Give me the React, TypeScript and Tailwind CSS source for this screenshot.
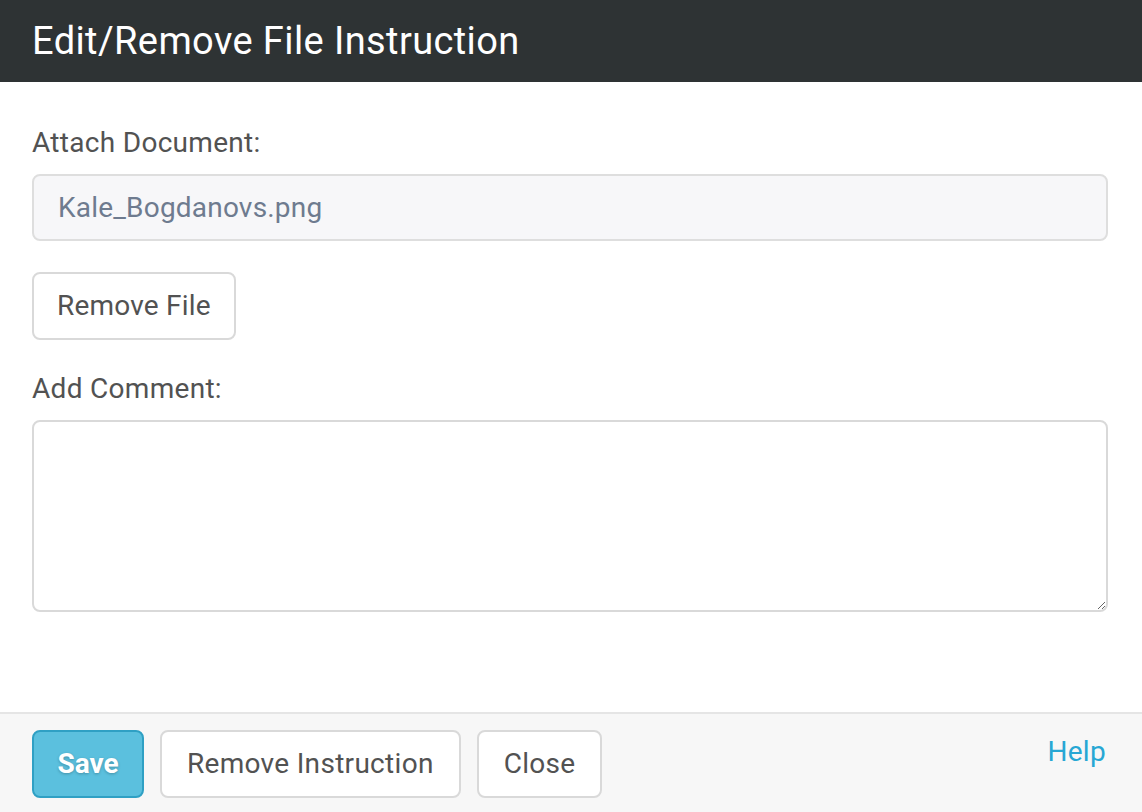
import React, { useState } from "react";

export default function App() {
  const [comment, setComment] = useState("");

  return (
    <div
      className="w-[1142px] h-[812px] bg-white flex flex-col text-[#525252]"
      style={{ fontFamily: "Roboto, 'Noto Sans', 'Liberation Sans', sans-serif" }}
    >
      {/* Header */}
      <header className="h-[82px] shrink-0 bg-[#2e3334] flex items-center px-8">
        <h1 className="text-white text-[38px] leading-none tracking-[0.4px]">Edit/Remove File Instruction</h1>
      </header>

      {/* Body */}
      <main className="flex-1 pl-8 pr-[34px] pt-[46px]">
        <label className="block text-[28px] tracking-[0.3px] leading-[30px] mb-[16px]">Attach Document:</label>
        <div className="h-[67px] rounded-[8px] border-2 border-[#dedede] bg-[#f7f7f9] flex items-center px-[24px] text-[28px] tracking-[0.2px] text-[#6e7b8f]">
          Kale_Bogdanovs.png
        </div>

        <button className="mt-[31px] h-[68px] px-[23px] rounded-[8px] border-2 border-[#d9d9d9] bg-white text-[28px] tracking-[0.2px] text-[#525252]">
          Remove File
        </button>

        <label className="block mt-[34px] text-[28px] tracking-[0.3px] leading-[30px] mb-[16px]">Add Comment:</label>
        <textarea
          value={comment}
          onChange={(e) => setComment(e.target.value)}
          className="block w-full h-[192px] rounded-[8px] border-2 border-[#d9d9d9] bg-white outline-none p-4 text-[26px]"
        />
      </main>

      {/* Footer */}
      <footer className="h-[100px] shrink-0 border-t-2 border-[#e5e5e5] bg-[#f7f7f7] flex items-start pl-8 pr-[36px] pt-[16px]">
        <div className="flex gap-[16px]">
          <button
            className="h-[68px] w-[112px] rounded-[8px] border-2 border-[#2fa0c4] bg-[#5bc0de] text-white text-[28px] font-bold"
            style={{ textShadow: "0 1px 3px rgba(0,0,0,0.25)" }}
          >
            Save
          </button>
          <button className="h-[68px] px-[25px] rounded-[8px] border-2 border-[#d9d9d9] bg-white text-[28px] tracking-[0.3px] text-[#525252]">
            Remove Instruction
          </button>
          <button className="h-[68px] px-[25px] rounded-[8px] border-2 border-[#d9d9d9] bg-white text-[28px] tracking-[0.3px] text-[#525252]">
            Close
          </button>
        </div>
        <a href="#" className="ml-auto mt-[1px] text-[28px] tracking-[0.3px] text-[#27a7d4]">
          Help
        </a>
      </footer>
    </div>
  );
}
